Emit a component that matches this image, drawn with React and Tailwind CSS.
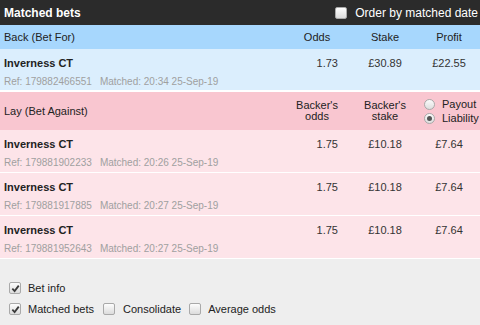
const FONT = { fontFamily: '"Liberation Sans", Arial, sans-serif' };

const back = [
  { ref: "179882466551", time: "20:34 25-Sep-19", odds: "1.73", stake: "£30.89", profit: "£22.55" },
];

const lay = [
  { ref: "179881902233", time: "20:26 25-Sep-19", odds: "1.75", stake: "£10.18", profit: "£7.64" },
  { ref: "179881917885", time: "20:27 25-Sep-19", odds: "1.75", stake: "£10.18", profit: "£7.64" },
  { ref: "179881952643", time: "20:27 25-Sep-19", odds: "1.75", stake: "£10.18", profit: "£7.64" },
];

function Box({ checked }) {
  return (
    <span className="flex h-[12px] w-[12px] shrink-0 items-center justify-center rounded-[2px] border border-[#a9a9a9] bg-gradient-to-b from-[#fdfdfd] to-[#dcdcdc]">
      {checked && (
        <svg width="9" height="9" viewBox="0 0 10 10">
          <path d="M1.5 5.2 L4 7.8 L8.6 1.8" fill="none" stroke="#3a3a3a" strokeWidth="2" />
        </svg>
      )}
    </span>
  );
}

function Radio({ checked }) {
  return (
    <span className="flex h-[11px] w-[11px] shrink-0 items-center justify-center rounded-full border border-[#a9a9a9] bg-gradient-to-b from-[#fbfbfb] to-[#dedede]">
      {checked && <span className="h-[5px] w-[5px] rounded-full bg-[#555]" />}
    </span>
  );
}

function BetRow({ b, bg }) {
  return (
    <div className={`flex h-[43px] border-b border-white ${bg}`}>
      <div className="flex-1 pl-[4px] pt-[7px]">
        <div className="text-[11px] font-bold leading-[14px] text-[#222]">Inverness CT</div>
        <div className="mt-[5px] text-[10px] leading-[13px] text-[#a0a0a0]">
          Ref: {b.ref}
          <span className="ml-[8px]">Matched: {b.time}</span>
        </div>
      </div>
      <div className="w-[66px] pr-[12px] pt-[7px] text-right text-[11px] leading-[14px] text-[#333]">{b.odds}</div>
      <div className="w-[70px] pt-[7px] text-center text-[11px] leading-[14px] text-[#333]">{b.stake}</div>
      <div className="w-[58px] pt-[7px] text-center text-[11px] leading-[14px] text-[#333]">{b.profit}</div>
      <div className="w-[2px]" />
    </div>
  );
}

export default function App() {
  return (
    <div style={FONT} className="h-[325px] w-[480px] overflow-hidden bg-[#eeeeee]">
      <div className="flex h-[25px] items-center justify-between bg-[#2b2b2b] pl-[4px] pr-[2px]">
        <span className="text-[12px] font-bold text-white">Matched bets</span>
        <label className="flex items-center gap-[8px] text-[12px] text-white">
          <Box checked={false} />
          Order by matched date
        </label>
      </div>

      <div className="flex h-[24px] items-center bg-[#a7d7fd] text-[11px] text-[#222]">
        <div className="flex-1 pl-[4px]">Back (Bet For)</div>
        <div className="w-[66px] text-center">Odds</div>
        <div className="w-[70px] text-center">Stake</div>
        <div className="w-[58px] text-center">Profit</div>
        <div className="w-[2px]" />
      </div>
      {back.map((b) => (
        <BetRow key={b.ref} b={b} bg="bg-[#dbeefd] h-[42px] border-b-2" />
      ))}

      <div className="flex h-[38px] items-center bg-[#f9c6d0] text-[11px] text-[#222]">
        <div className="flex-1 pl-[4px]">Lay (Bet Against)</div>
        <div className="w-[66px] text-center leading-[11px]">
          <div>Backer's</div>
          <div>odds</div>
        </div>
        <div className="w-[70px] text-center leading-[11px]">
          <div>Backer's</div>
          <div>stake</div>
        </div>
        <div className="flex w-[58px] flex-col gap-[2px] pl-[4px] leading-[12px]">
          <label className="flex items-center gap-[7px]">
            <Radio checked={false} />
            Payout
          </label>
          <label className="flex items-center gap-[7px]">
            <Radio checked />
            Liability
          </label>
        </div>
        <div className="w-[2px]" />
      </div>
      {lay.map((b) => (
        <BetRow key={b.ref} b={b} bg="bg-[#fde4e9]" />
      ))}

      <div className="flex flex-col gap-[7px] pl-[9px] pt-[22px] text-[11px] leading-[14px] text-[#222]">
        <label className="flex items-center gap-[7px]">
          <Box checked />
          Bet info
        </label>
        <div className="flex items-center">
          <label className="flex items-center gap-[7px]">
            <Box checked />
            Matched bets
          </label>
          <label className="ml-[9px] flex items-center gap-[8px]">
            <Box checked={false} />
            Consolidate
          </label>
          <label className="ml-[8px] flex items-center gap-[7px]">
            <Box checked={false} />
            Average odds
          </label>
        </div>
      </div>
    </div>
  );
}
